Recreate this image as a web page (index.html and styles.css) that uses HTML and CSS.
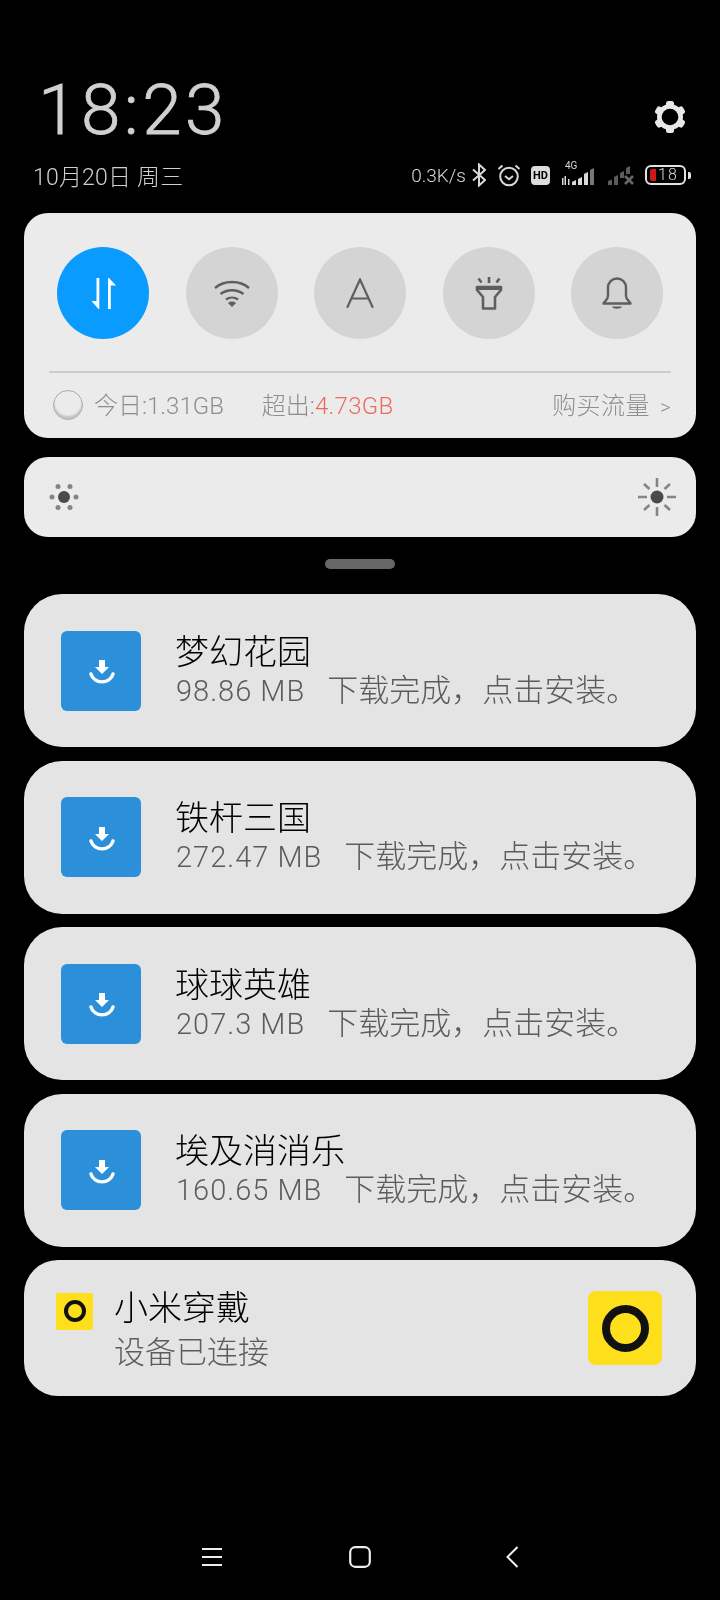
FILE: index.html
```html
<!DOCTYPE html>
<html lang="zh-CN">
<head>
    <meta charset="UTF-8">
    <title>通知栏</title>
    <link rel="stylesheet" href="styles.css">
</head>
<body>
<div class="screen">
    <div class="top-row">
        <div class="clock">18:23</div>
        <svg class="gear" width="32" height="32" viewBox="0 0 32 32">
            <g fill="#e8e8e8">
                <rect x="12" y="0" width="8" height="32" rx="2.500"/>
                <rect x="12" y="0" width="8" height="32" rx="2.500" transform="rotate(60 16 16)"/>
                <rect x="12" y="0" width="8" height="32" rx="2.500" transform="rotate(120 16 16)"/>
                <circle cx="16" cy="16" r="13"/>
            </g>
            <circle cx="16" cy="16" r="8.300" fill="#000"/>
        </svg>
    </div>
    <div class="status-row">
        <div class="date">10月20日 周三</div>
        <div class="status-icons">
            <span class="speed">0.3K/s</span>
            <svg class="ic-bt" width="14" height="24" viewBox="0 0 14 24">
                <path fill="none" stroke="#d8d8d8" stroke-width="2" d="M1 6.500l12 10.500-6 5.500V1.500l6 5.500L1 17.500"/>
            </svg>
            <svg class="ic-alarm" width="24" height="24" viewBox="0 0 24 24">
                <circle cx="12" cy="13.500" r="8.800" fill="none" stroke="#d8d8d8" stroke-width="2"/>
                <path fill="none" stroke="#d8d8d8" stroke-width="2" d="M1.500 6l4-3.500M22.500 6l-4-3.500M8 13l4 3.200 4-3.200"/>
            </svg>
            <span class="hd">HD</span>
            <div class="signal">
                <span class="net">4G</span>
                <svg width="38" height="20" viewBox="0 0 38 20">
                    <path fill="#d8d8d8" d="M1 13h1.500v7H1zM3.500 11H5v9H3.500zM7 14h1.500v6H7z"/>
                    <path fill="#d8d8d8" d="M11 17l4-2v5h-4zM17 14l4-2v8h-4zM23 9l4-2v13h-4z"/>
                    <path fill="#777" d="M29 5l4-2v17h-4z"/>
                </svg>
            </div>
            <svg class="ic-sim2" width="28" height="20" viewBox="0 0 28 20">
                <path fill="#5c5c5c" d="M1 16l4-1.500V20H1zM7 12l4-2v10H7zM13 8l4-2v7h-4zM19 3l4-2v8h-4z"/>
                <path fill="none" stroke="#666" stroke-width="2.600" d="M18 11l8 8M26 11l-8 8"/>
            </svg>
            <div class="battery">
                <div class="batt-body"><span class="batt-fill"></span><span class="batt-num">18</span></div>
                <span class="batt-tip"></span>
            </div>
        </div>
    </div>

    <div class="panel toggles">
        <div class="toggle-row">
            <div class="toggle on">
                <svg width="25" height="31" viewBox="0 0 25 31">
                    <path fill="#fff" d="M5.500 0h2.800v31H7.500l-7-8h5zM17 0h1l7 7.500h-5.200V31H17z"/>
                </svg>
            </div>
            <div class="toggle">
                <svg width="36" height="27" viewBox="0 0 36 27" fill="none" stroke="#5e5e5e" stroke-width="2.400">
                    <path d="M1 8C10 0 26 0 35 8M6.500 14c6.500-5 16.500-5 23 0M12 19.500c3.500-2.500 8.500-2.500 12 0"/>
                    <path fill="#5e5e5e" stroke="none" d="M18 27l-4-4c2-2 6-2 8 0z"/>
                </svg>
            </div>
            <div class="toggle">
                <svg width="28" height="30" viewBox="0 0 28 30" fill="none" stroke="#5e5e5e" stroke-width="2.200" stroke-linecap="round">
                    <path d="M1.500 29L14 1.500 26.500 29M6 20.500h16"/>
                </svg>
            </div>
            <div class="toggle">
                <svg width="28" height="33" viewBox="0 0 28 33" fill="none" stroke="#5e5e5e" stroke-width="2.600">
                    <path d="M14 0v6M3.500 1.500l3 4M24.500 1.500l-3 4"/>
                    <path stroke-linejoin="round" d="M2 10h24v3l-6 7v11.500H8V20l-6-7z"/>
                    <path stroke-width="2" d="M2 12h24"/>
                </svg>
            </div>
            <div class="toggle">
                <svg width="30" height="33" viewBox="0 0 30 33" fill="none" stroke="#5e5e5e" stroke-width="2.400" stroke-linejoin="round">
                    <path d="M1.500 26.500c0-1.500 4.500-3 4.500-7.500V10.500a9 9 0 0 1 18 0V19c0 4.500 4.500 6 4.500 7.500z"/>
                    <path fill="#5e5e5e" stroke="none" d="M10 29.500h10c-1 3-9 3-10 0z"/>
                </svg>
            </div>
        </div>
        <div class="usage">
            <span class="ring"></span>
            <span class="today">今日:1.31GB</span>
            <span class="over">超出:<em>4.73GB</em></span>
            <span class="buy">购买流量<i>&gt;</i></span>
        </div>
    </div>

    <div class="panel slider">
        <svg width="30" height="30" viewBox="0 0 30 30">
            <circle cx="15" cy="15" r="6" fill="#4a4a4a"/>
            <g fill="#858585">
                <circle cx="9" cy="4.500" r="2.500"/><circle cx="21" cy="4.500" r="2.500"/>
                <circle cx="3" cy="15" r="2.500"/><circle cx="27" cy="15" r="2.500"/>
                <circle cx="9" cy="25.500" r="2.500"/><circle cx="21" cy="25.500" r="2.500"/>
            </g>
        </svg>
        <svg width="38" height="38" viewBox="0 0 38 38">
            <circle cx="19" cy="19" r="6.500" fill="#4a4a4a"/>
            <path stroke="#858585" stroke-width="2.600" d="M19 0v9M19 29v9M0 19h9M29 19h9M6 6l5.500 5M26.500 27l5.500 5M32 6l-5.500 5M11.500 27L6 32"/>
        </svg>
    </div>

    <div class="handle"></div>

    <div class="note">
        <div class="app-icon"><svg width="26" height="24" viewBox="0 0 26 24"><path fill="#fff" d="M10 0h6v7h4L13 14 6 7h4z"/><path fill="none" stroke="#fff" stroke-width="3.400" stroke-linecap="round" d="M2 14c3 10.500 19 10.500 22 0"/></svg></div>
        <div class="note-text">
            <div class="note-title">梦幻花园</div>
            <div class="note-sub"><span class="size">98.86 MB</span>下载完成，点击安装。</div>
        </div>
    </div>
    <div class="note">
        <div class="app-icon"><svg width="26" height="24" viewBox="0 0 26 24"><path fill="#fff" d="M10 0h6v7h4L13 14 6 7h4z"/><path fill="none" stroke="#fff" stroke-width="3.400" stroke-linecap="round" d="M2 14c3 10.500 19 10.500 22 0"/></svg></div>
        <div class="note-text">
            <div class="note-title">铁杆三国</div>
            <div class="note-sub"><span class="size">272.47 MB</span>下载完成，点击安装。</div>
        </div>
    </div>
    <div class="note">
        <div class="app-icon"><svg width="26" height="24" viewBox="0 0 26 24"><path fill="#fff" d="M10 0h6v7h4L13 14 6 7h4z"/><path fill="none" stroke="#fff" stroke-width="3.400" stroke-linecap="round" d="M2 14c3 10.500 19 10.500 22 0"/></svg></div>
        <div class="note-text">
            <div class="note-title">球球英雄</div>
            <div class="note-sub"><span class="size">207.3 MB</span>下载完成，点击安装。</div>
        </div>
    </div>
    <div class="note">
        <div class="app-icon"><svg width="26" height="24" viewBox="0 0 26 24"><path fill="#fff" d="M10 0h6v7h4L13 14 6 7h4z"/><path fill="none" stroke="#fff" stroke-width="3.400" stroke-linecap="round" d="M2 14c3 10.500 19 10.500 22 0"/></svg></div>
        <div class="note-text">
            <div class="note-title">埃及消消乐</div>
            <div class="note-sub"><span class="size">160.65 MB</span>下载完成，点击安装。</div>
        </div>
    </div>

    <div class="note band">
        <div class="band-small"><span></span></div>
        <div class="band-text">
            <div class="note-title">小米穿戴</div>
            <div class="band-sub">设备已连接</div>
        </div>
        <div class="band-big"><span></span></div>
    </div>

    <div class="navbar">
        <svg width="20" height="20" viewBox="0 0 20 20"><path stroke="#eee" stroke-width="2" d="M0 2h20M0 10h20M0 18h20"/></svg>
        <svg width="22" height="22" viewBox="0 0 22 22"><rect x="1.200" y="1.200" width="19.600" height="19.600" rx="5" fill="none" stroke="#eee" stroke-width="2.200"/></svg>
        <svg class="nav-back" width="12" height="22" viewBox="0 0 12 22"><path fill="none" stroke="#eee" stroke-width="2" d="M11.500 1L1.500 11l10 10"/></svg>
    </div>
</div>
</body>
</html>
```

FILE: styles.css
```css
*{
    margin: 0;
    padding: 0;
    box-sizing: border-box;
}
html,body{
    background: #000;
}
.screen{
    width: 720px;
    height: 1600px;
    padding: 71px 24px 0;
    font-family: "Roboto","Noto Sans CJK SC",sans-serif;
    display: flex;
    flex-direction: column;
    will-change: transform;
}
.top-row{
    display: flex;
    justify-content: space-between;
    align-items: flex-end;
    height: 76px;
    padding-left: 14px;
    padding-right: 10px;
}
.clock{
    font-size: 71px;
    line-height: 76px;
    font-weight: 300;
    letter-spacing: 3.500px;
    color: #d0d0d0;
    -webkit-text-stroke: 0.8px #d0d0d0;
    transform: translateY(1px);
}
.gear{
    margin-bottom: 14px;
}
.status-row{
    display: flex;
    justify-content: space-between;
    align-items: center;
    height: 36px;
    margin-top: 10px;
    padding-left: 9px;
}
.date{
    font-size: 23px;
    font-weight: 300;
    letter-spacing: 0.2px;
    color: #d0d0d0;
}
.status-icons{
    display: flex;
    align-items: center;
    color: #d8d8d8;
}
.speed{
    font-size: 19px;
    font-weight: 300;
    margin-right: 6px;
}
.ic-alarm{
    margin-left: 11px;
}
.hd{
    width: 19px;
    height: 19px;
    margin-left: 10px;
    border-radius: 4px;
    background: #dcdcdc;
    color: #000;
    font-size: 11px;
    font-weight: 700;
    line-height: 19px;
    text-align: center;
}
.signal{
    position: relative;
    width: 38px;
    height: 20px;
    margin-left: 11px;
}
.signal svg{
    display: block;
}
.net{
    position: absolute;
    left: 4px;
    top: -4px;
    font-size: 10px;
    line-height: 10px;
}
.ic-sim2{
    margin-left: 8px;
}
.battery{
    display: flex;
    align-items: center;
    margin-left: 10px;
    margin-right: 5px;
}
.batt-body{
    display: flex;
    align-items: center;
    width: 41px;
    height: 20px;
    padding-left: 3px;
    border: 2px solid #e2e2e2;
    border-radius: 6px;
}
.batt-fill{
    width: 6px;
    height: 12px;
    background: #d01818;
    border-radius: 2px 0 0 2px;
}
.batt-num{
    margin-left: 2px;
    font-size: 16px;
    font-weight: 300;
    line-height: 16px;
    letter-spacing: 1px;
}
.batt-tip{
    width: 3px;
    height: 7px;
    margin-left: 2px;
    background: #e2e2e2;
    border-radius: 0 2px 2px 0;
}
.panel{
    background: #ebebeb;
    border-radius: 24px;
}
.toggles{
    height: 225px;
    margin-top: 20px;
    padding: 34px 25px 0;
}
.toggle-row{
    display: flex;
    justify-content: space-between;
    padding: 0 8px;
    height: 126px;
    border-bottom: 2px solid #cbcbcb;
}
.toggle{
    width: 92px;
    height: 92px;
    border-radius: 50%;
    background: #d4d4d4;
    display: flex;
    align-items: center;
    justify-content: center;
}
.toggle.on{
    background: #0a9bff;
}
.usage{
    display: flex;
    align-items: center;
    height: 60px;
    font-size: 24px;
    font-weight: 300;
    color: #8e8e8e;
}
.ring{
    width: 30px;
    height: 30px;
    margin-top: 4px;
    margin-left: 4px;
    margin-right: 11px;
    border: 1.500px solid #a8a8a8;
    border-radius: 50%;
    box-shadow: inset 0 -3px 2px #c4c4c4;
}
.over{
    margin-left: 38px;
}
.over em{
    font-style: normal;
    color: #ee6a60;
    letter-spacing: 0.3px;
}
.buy{
    margin-left: auto;
    letter-spacing: 0.5px;
}
.buy i{
    font-style: normal;
    font-size: 20px;
    margin-left: 10px;
}
.slider{
    height: 80px;
    margin-top: 19px;
    padding: 0 20px 0 25px;
    display: flex;
    align-items: center;
    justify-content: space-between;
}
.handle{
    width: 70px;
    height: 10px;
    margin: 22px auto 25px;
    background: #666;
    border-radius: 5px;
}
.note{
    display: flex;
    align-items: center;
    height: 153px;
    margin-bottom: 13.600px;
    padding-left: 37px;
    background: #e4e4e4;
    border-radius: 38px;
}
.app-icon{
    width: 80px;
    height: 80px;
    flex-shrink: 0;
    padding: 3px 0 0 1px;
    border-radius: 6px;
    background: #2b90d9;
    display: flex;
    align-items: center;
    justify-content: center;
}
.note-text{
    margin-left: 34px;
}
.note-title{
    font-size: 34px;
    line-height: 40px;
    font-weight: 300;
    color: #000;
}
.note-sub{
    display: flex;
    align-items: baseline;
    padding-left: 1px;
    font-size: 31px;
    line-height: 38px;
    font-weight: 300;
    color: #5c5c5c;
}
.size{
    margin-right: 22px;
    font-size: 29px;
    letter-spacing: 1px;
}
.band{
    height: 136px;
    margin-bottom: 0;
    padding: 0 34px 0 32px;
    border-radius: 34px;
}
.band-small{
    width: 37px;
    height: 37px;
    flex-shrink: 0;
    margin-bottom: 34px;
    background: #fedf1c;
    border-radius: 2px;
    display: flex;
    align-items: center;
    justify-content: center;
}
.band-small span{
    width: 22px;
    height: 22px;
    border: 4px solid #111;
    border-radius: 50%;
}
.band-text{
    margin-left: 21px;
    padding-top: 7px;
}
.band-sub{
    margin-top: 2px;
    font-size: 31px;
    line-height: 46px;
    font-weight: 300;
    color: #5c5c5c;
}
.band-big{
    width: 74px;
    height: 74px;
    margin-left: auto;
    background: #fedf1c;
    border-radius: 8px;
    display: flex;
    align-items: center;
    justify-content: center;
}
.band-big span{
    width: 47px;
    height: 47px;
    border: 8px solid #111;
    border-radius: 50%;
}
.navbar{
    display: flex;
    align-items: center;
    gap: 127px;
    margin-top: 150px;
    padding-left: 178px;
}
.nav-back{
    margin-left: 8px;
}
```
